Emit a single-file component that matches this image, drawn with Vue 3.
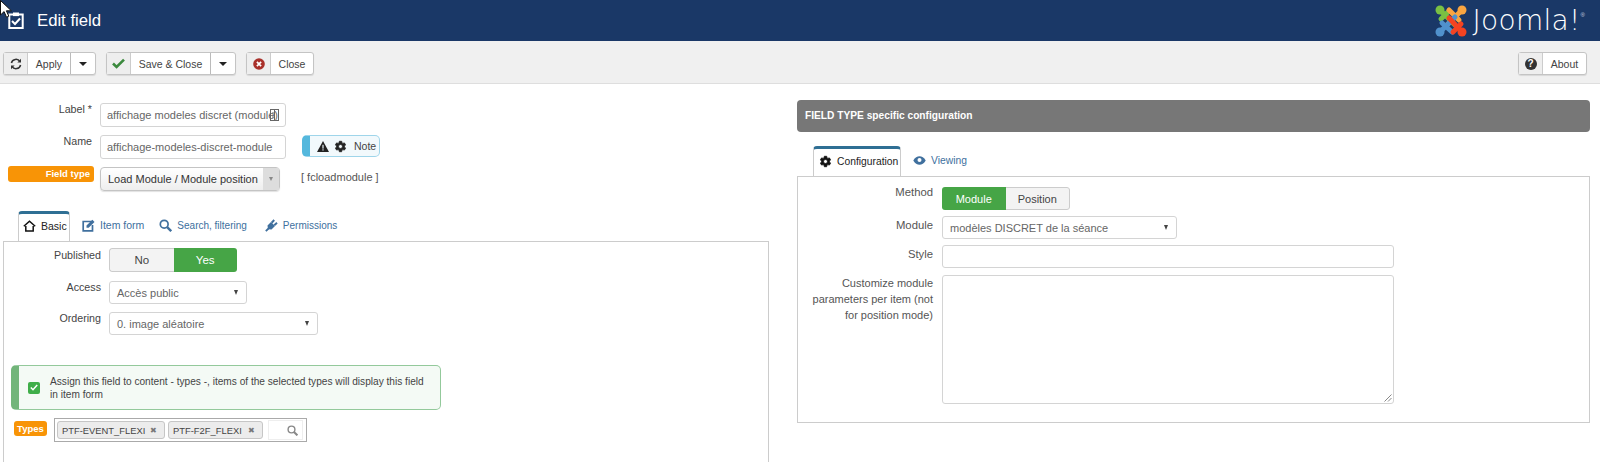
<script setup>
const gear = 'M19.14 12.94c.04-.3.06-.61.06-.94 0-.32-.02-.64-.07-.94l2.03-1.58a.49.49 0 0 0 .12-.61l-1.92-3.32a.488.488 0 0 0-.59-.22l-2.39.96c-.5-.38-1.03-.7-1.62-.94l-.36-2.54a.484.484 0 0 0-.48-.41h-3.84c-.24 0-.43.17-.47.41l-.36 2.54c-.59.24-1.13.57-1.62.94l-2.39-.96c-.22-.08-.47 0-.59.22L2.74 8.87c-.12.21-.08.47.12.61l2.03 1.58c-.05.3-.09.63-.09.94s.02.64.07.94l-2.03 1.58a.49.49 0 0 0-.12.61l1.92 3.32c.12.22.37.29.59.22l2.39-.96c.5.38 1.03.7 1.62.94l.36 2.54c.05.24.24.41.48.41h3.84c.24 0 .44-.17.47-.41l.36-2.54c.59-.24 1.13-.56 1.62-.94l2.39.96c.22.08.47 0 .59-.22l1.92-3.32c.12-.22.07-.47-.12-.61l-2.01-1.58zM12 15.6c-1.98 0-3.6-1.62-3.6-3.6s1.62-3.6 3.6-3.6 3.6 1.62 3.6 3.6-1.62 3.6-3.6 3.6z'
</script>

<template>
  <div class="page">
    <svg class="cursor" width="13" height="20" viewBox="0 0 13 20">
      <path d="M0.5 0.5V15l3.6-3.4 2.4 5.6 2.3-1-2.4-5.4h5z" fill="#fff" stroke="#111" stroke-width="1" />
    </svg>

    <header class="topbar">
      <div class="title">
        <svg class="title-icon" width="16" height="17" viewBox="0 0 16 17">
          <path d="M5 2.500H1.300v13.500h13.400V2.500H11" fill="none" stroke="#fff" stroke-width="2" />
          <rect x="5" y="0.500" width="6" height="3.600" fill="#fff" />
          <path d="M4 9l3 3 5-5.500" fill="none" stroke="#fff" stroke-width="2" />
        </svg>
        <span>Edit field</span>
      </div>
      <div class="brand">
        <svg width="32" height="32" viewBox="0 0 32 32" fill="none" stroke-width="5" stroke-linecap="round">
          <path d="M14 6L6 14" stroke="#7ac143" />
          <path d="M5 5l15 15" stroke="#7ac143" />
          <circle cx="5" cy="5" r="4.500" fill="#7ac143" />
          <path d="M14 5l10 10" stroke="#f9a541" />
          <path d="M27 5L12 20" stroke="#f9a541" />
          <circle cx="27" cy="5" r="4.500" fill="#f9a541" />
          <path d="M5 27L20 12" stroke="#5091cd" />
          <path d="M7 18l10 9" stroke="#5091cd" />
          <circle cx="5" cy="27" r="4.500" fill="#5091cd" />
          <path d="M27 27L14 13" stroke="#f44321" />
          <path d="M18 27l8-8" stroke="#f44321" />
          <circle cx="27" cy="27" r="4.500" fill="#f44321" />
        </svg>
        <span class="brand-word">Joomla!</span><sup class="brand-reg">®</sup>
      </div>
    </header>

    <nav class="toolbar">
      <div class="btn-group">
        <span class="btn-icon">
          <svg width="12" height="12" viewBox="0 0 12 12" fill="none" stroke="#333" stroke-width="1.500">
            <path d="M1.400 5A4.700 4.700 0 0 1 10 3.600" />
            <path d="M10.600 7A4.700 4.700 0 0 1 2 8.400" />
            <path d="M11 .8V4.400H7.400z" fill="#333" stroke="none" />
            <path d="M1 11.200V7.600h3.600z" fill="#333" stroke="none" />
          </svg>
        </span>
        <span class="btn-text w-apply">Apply</span>
        <span class="btn-caret"><i class="caret"></i></span>
      </div>
      <div class="btn-group">
        <span class="btn-icon">
          <svg width="13" height="11" viewBox="0 0 13 11" fill="none" stroke="#3c8a3e" stroke-width="2.600">
            <path d="M1 5.500l3.600 3.500L12 1.600" />
          </svg>
        </span>
        <span class="btn-text w-save">Save &amp; Close</span>
        <span class="btn-caret"><i class="caret"></i></span>
      </div>
      <div class="btn-group">
        <span class="btn-icon">
          <svg width="12" height="12" viewBox="0 0 12 12">
            <circle cx="6" cy="6" r="5.800" fill="#a9302a" />
            <path d="M3.900 3.900l4.200 4.200M8.100 3.900L3.900 8.100" stroke="#fff" stroke-width="1.700" />
          </svg>
        </span>
        <span class="btn-text w-close">Close</span>
      </div>
      <div class="btn-group about">
        <span class="btn-icon">
          <span class="help">?</span>
        </span>
        <span class="btn-text w-about">About</span>
      </div>
    </nav>

    <main class="content">
      <section class="left">
        <div class="row row-label">
          <label class="lbl lbl-top">Label *</label>
          <div class="input input-top">
            <span class="input-val">affichage modeles discret (module)</span>
            <svg class="copy-ico" width="9" height="12" viewBox="0 0 9 12" fill="none" stroke="#666">
              <rect x="0.500" y="0.500" width="8" height="11" />
              <path d="M4.500 .5v11M2 4h2.500M2 8h2.500" />
            </svg>
          </div>
        </div>
        <div class="row row-name">
          <label class="lbl lbl-top">Name</label>
          <div class="input input-top"><span class="input-val">affichage-modeles-discret-module</span></div>
          <div class="note">
            <svg width="12" height="11" viewBox="0 0 12 11"><path d="M6 0l6 11H0z" fill="#222" /><rect x="5.400" y="3.800" width="1.200" height="3.800" fill="#e9f6fb" /><rect x="5.400" y="8.300" width="1.200" height="1.200" fill="#e9f6fb" /></svg>
            <svg width="13" height="13" viewBox="0 0 24 24"><path :d="gear" fill="#222" stroke="#222" stroke-width="1.500" /></svg>
            <span>Note</span>
          </div>
        </div>
        <div class="row row-type">
          <span class="field-type">Field type</span>
          <div class="chosen">
            <span class="chosen-val">Load Module / Module position</span>
            <span class="chosen-arrow"><i class="mini-caret"></i></span>
          </div>
          <span class="type-code">[ fcloadmodule ]</span>
        </div>

        <div class="tabs tabs-left">
          <span class="tab active">
            <svg width="13" height="12" viewBox="0 0 13 12" fill="none" stroke="#111" stroke-width="1.500">
              <path d="M.8 6.300L6.500 1.200l5.700 5.100" /><path d="M2.800 6v5h7.400V6" />
            </svg>
            <span>Basic</span>
          </span>
          <span class="tab">
            <svg width="13" height="13" viewBox="0 0 13 13" fill="none">
              <path d="M10 2.500H1.200v9.300h9.300V6" stroke="#40709e" stroke-width="1.700" />
              <path d="M4.500 8.800V6.600L10.400.8l2.100 2.100L6.700 8.800z" fill="#40709e" />
            </svg>
            <span>Item form</span>
          </span>
          <span class="tab tab-narrow">
            <svg width="13" height="13" viewBox="0 0 13 13" fill="none" stroke="#40709e">
              <circle cx="5.200" cy="5.200" r="3.900" stroke-width="1.700" />
              <path d="M8.200 8.200l4 4" stroke-width="2.400" />
            </svg>
            <span>Search, filtering</span>
          </span>
          <span class="tab tab-narrow">
            <svg width="13" height="13" viewBox="0 0 13 13" fill="#40709e" stroke="#40709e">
              <path d="M3 10.300L2.500 6.500 6 3l4 4-3.500 3.500z" stroke="none" />
              <path d="M6.700 3.700L9.200 1M9.300 6.300L12 3.800" stroke-width="2" fill="none" />
              <path d="M3.500 9.500L.8 12.200" stroke-width="1.800" fill="none" />
            </svg>
            <span>Permissions</span>
          </span>
        </div>

        <div class="panel panel-left">
          <div class="row p-published">
            <label class="lbl lbl-panel">Published</label>
            <div class="toggle">
              <span class="tg tg-off">No</span>
              <span class="tg tg-on">Yes</span>
            </div>
          </div>
          <div class="row p-access">
            <label class="lbl lbl-panel">Access</label>
            <div class="select s-access"><span>Accès public</span><i class="sel-caret"></i></div>
          </div>
          <div class="row p-ordering">
            <label class="lbl lbl-panel">Ordering</label>
            <div class="select s-ordering"><span>0. image aléatoire</span><i class="sel-caret"></i></div>
          </div>

          <div class="assign">
            <span class="checkbox">
              <svg width="8" height="7" viewBox="0 0 8 7" fill="none" stroke="#fff" stroke-width="1.500"><path d="M.8 3.500l2.200 2.200L7.200 1" /></svg>
            </span>
            <p>Assign this field to content - types -, items of the selected types will display this field in item form</p>
          </div>

          <div class="types-row">
            <span class="types-badge">Types</span>
            <div class="types-box">
              <span class="chip chip-a">PTF-EVENT_FLEXI<b>✖</b></span>
              <span class="chip chip-b">PTF-F2F_FLEXI<b>✖</b></span>
              <span class="type-search">
                <svg width="11" height="11" viewBox="0 0 11 11" fill="none" stroke="#888">
                  <circle cx="4.500" cy="4.500" r="3.400" stroke-width="1.400" />
                  <path d="M7 7l3.400 3.400" stroke-width="2" />
                </svg>
              </span>
            </div>
          </div>
        </div>
      </section>

      <section class="right">
        <div class="heading">FIELD TYPE specific configuration</div>
        <div class="tabs tabs-right">
          <span class="tab active">
            <svg width="13" height="13" viewBox="0 0 24 24"><path :d="gear" fill="#111" stroke="#111" stroke-width="1.500" /></svg>
            <span>Configuration</span>
          </span>
          <span class="tab">
            <svg width="13" height="9" viewBox="0 0 13 9">
              <path d="M.3 4.500C2 1.600 4.200.3 6.500.3s4.500 1.300 6.200 4.200C11 7.400 8.800 8.700 6.500 8.700S2 7.400.3 4.500z" fill="#40709e" />
              <circle cx="6.500" cy="4" r="2" fill="#fff" />
            </svg>
            <span>Viewing</span>
          </span>
        </div>
        <div class="panel panel-right">
          <div class="row r-method">
            <label class="lbl lbl-right">Method</label>
            <div class="toggle toggle-right">
              <span class="tg tg-on">Module</span>
              <span class="tg tg-off tg-plain">Position</span>
            </div>
          </div>
          <div class="row r-module">
            <label class="lbl lbl-right">Module</label>
            <div class="select s-module"><span>modèles DISCRET de la séance</span><i class="sel-caret"></i></div>
          </div>
          <div class="row r-style">
            <label class="lbl lbl-right">Style</label>
            <div class="select s-style"></div>
          </div>
          <div class="row r-custom">
            <label class="lbl lbl-right lbl-multi">Customize module parameters per item (not for position mode)</label>
            <div class="textarea">
              <svg class="grip" width="8" height="8" viewBox="0 0 8 8" stroke="#888" fill="none">
                <path d="M7.500 .5L.5 7.500M7.500 4L4 7.500" />
              </svg>
            </div>
          </div>
        </div>
      </section>
    </main>
  </div>
</template>

<style>
html, body { margin: 0; background: #fff; overflow: hidden; }
</style>

<style scoped>
.page {
  position: relative;
  width: 1600px;
  height: 462px;
  overflow: hidden;
  font-family: "Liberation Sans", Arial, sans-serif;
  font-size: 12px;
  color: #555;
  background: #fff;
}
.cursor { position: absolute; left: 0; top: 0; z-index: 5; }

.topbar {
  height: 41px;
  background: #1a3867;
  display: flex;
  justify-content: space-between;
  align-items: center;
  color: #fff;
}
.title { display: flex; align-items: center; gap: 13px; padding: 0 0 0 8px; font-size: 16.700px; }
.title-icon { flex: none; }
.brand { display: flex; align-items: center; padding-right: 15px; }
.brand svg { margin-right: 6px; }
.brand-word {
  font-family: "DejaVu Sans", Lato, sans-serif;
  font-weight: 200;
  font-size: 28px;
  line-height: 30px;
  letter-spacing: 0.300px;
}
.brand-reg { font-size: 6px; margin: -12px 0 0 0; color: #cfd6e0; }

.toolbar {
  height: 43px;
  box-sizing: border-box;
  background: #f0f0f0;
  border-bottom: 1px solid #dedede;
  display: flex;
  align-items: flex-start;
  padding: 11px 13px 0 3px;
  gap: 10px;
}
.btn-group {
  display: flex;
  height: 23px;
  box-sizing: border-box;
  border: 1px solid #c4c4c4;
  border-radius: 3px;
  background: #fff;
  font-size: 10.500px;
  color: #444;
  box-shadow: 0 1px 1px rgba(0,0,0,.1);
}
.btn-icon {
  width: 23px;
  background: #eee;
  border-right: 1px solid #ccc;
  display: flex;
  align-items: center;
  justify-content: center;
}
.btn-text { display: flex; align-items: center; justify-content: center; }
.w-apply { width: 42px; }
.w-save { width: 79px; }
.w-close { width: 42px; }
.w-about { width: 43px; font-size: 10.500px; }
.btn-caret {
  width: 24px;
  border-left: 1px solid #bbb;
  display: flex;
  align-items: center;
  justify-content: center;
}
.caret {
  width: 0; height: 0;
  border-left: 4px solid transparent;
  border-right: 4px solid transparent;
  border-top: 4px solid #222;
}
.about { margin-left: auto; }
.help {
  width: 12px; height: 12px;
  border-radius: 50%;
  background: #333;
  color: #fff;
  font-size: 10px;
  font-weight: 700;
  line-height: 12px;
  text-align: center;
}

.content { display: flex; align-items: flex-start; }
.left { width: 770px; flex: none; padding-top: 19px; }
.right { flex: none; margin-left: 27px; width: 793px; padding-top: 16px; }
.row { display: flex; align-items: flex-start; }
.lbl { display: block; text-align: right; }
.lbl-top { width: 92px; margin-right: 8px; color: #444; font-size: 10.700px; line-height: 12px; }
.row-name { margin-top: 8px; }
.input {
  box-sizing: border-box;
  height: 24px;
  border: 1px solid #d4d4d4;
  border-radius: 3px;
  display: flex;
  align-items: center;
  position: relative;
  padding: 0 6px;
}
.input-top { width: 186px; font-size: 11px; color: #666; overflow: hidden; }
.input-val { white-space: nowrap; }
.copy-ico { position: absolute; right: 6px; top: 5px; }
.note {
  box-sizing: border-box;
  margin-left: 16px;
  width: 78px;
  height: 22px;
  border: 1px solid #9fd5ea;
  border-left: 8px solid #55b8dd;
  border-radius: 5px;
  background: #f2f9fc;
  display: flex;
  align-items: center;
  padding-left: 7px;
  gap: 5px;
  font-size: 10.500px;
  color: #444;
}
.note span { margin-left: 2px; }
.row-type { margin-top: 7px; }
.field-type {
  box-sizing: border-box;
  margin: 0 0 0 8px;
  width: 86px;
  height: 16px;
  background: #f89406;
  border-radius: 3px;
  color: #fff;
  font-size: 9.500px;
  font-weight: 700;
  line-height: 15px;
  text-align: right;
  padding-right: 4px;
}
.chosen {
  margin: 1px 0 0 6px;
  box-sizing: border-box;
  width: 180px;
  height: 24px;
  border: 1px solid #c4c4c4;
  border-radius: 4px;
  display: flex;
  background: linear-gradient(#fff, #eee);
  box-shadow: 0 1px 1px rgba(0,0,0,.12);
}
.chosen-val { flex: 1; padding-left: 7px; line-height: 22px; font-size: 11px; color: #333; white-space: nowrap; }
.chosen-arrow {
  width: 16px;
  background: #ddd;
  display: flex;
  align-items: center;
  justify-content: center;
}
.mini-caret {
  width: 0; height: 0;
  border-left: 2.500px solid transparent;
  border-right: 2.500px solid transparent;
  border-top: 4px solid #888;
}
.type-code { margin: 5px 0 0 21px; font-size: 11px; color: #555; white-space: nowrap; }

.tabs { display: flex; font-size: 10.500px; color: #40709e; }
.tab { display: flex; align-items: center; gap: 5px; white-space: nowrap; }
.tab-narrow { font-size: 10px; }
.tab.active {
  position: relative;
  z-index: 1;
  box-sizing: border-box;
  background: #fff;
  border: 1px solid #ccc;
  border-top: 3px solid #2f6f94;
  border-bottom: 0;
  border-radius: 4px 4px 0 0;
  color: #222;
}
.tabs-left { margin: 20px 0 0 18px; height: 30px; }
.tabs-left .tab.active { width: 52px; height: 30px; padding-left: 4px; padding-bottom: 3px; margin-bottom: -1px; }
.tabs-left .tab:nth-child(2) { margin-left: 12px; padding-bottom: 2px; }
.tabs-left .tab:nth-child(3) { margin-left: 15px; padding-bottom: 2px; }
.tabs-left .tab:nth-child(4) { margin-left: 18px; padding-bottom: 2px; }

.panel { box-sizing: border-box; border: 1px solid #ccc; }
.panel-left { margin-left: 3px; width: 766px; height: 240px; padding-top: 6px; }
.lbl-panel { width: 97px; margin-right: 8px; color: #444; font-size: 10.700px; line-height: 14px; }
.p-access .lbl, .p-ordering .lbl { line-height: 12px; }
.toggle {
  display: flex;
  width: 128px;
  height: 24px;
  box-sizing: border-box;
  border-radius: 3px;
  overflow: hidden;
  font-size: 11.500px;
}
.tg { flex: 1; display: flex; align-items: center; justify-content: center; box-sizing: border-box; }
.tg-off { background: #f3f3f3; border: 1px solid #ccc; border-right: 0; color: #444; border-radius: 3px 0 0 3px; }
.tg-plain { border: 1px solid #ccc; border-left: 0; border-radius: 0 3px 3px 0; font-size: 11px; }
.tg-on { background: #46a546; color: #fff; }
.p-access { margin-top: 9px; }
.p-ordering { margin-top: 8px; }
.select {
  box-sizing: border-box;
  height: 23px;
  border: 1px solid #d4d4d4;
  border-radius: 3px;
  display: flex;
  align-items: center;
  justify-content: space-between;
  padding: 0 7px;
  color: #666;
  font-size: 11px;
  background: #fff;
  white-space: nowrap;
}
.sel-caret {
  width: 0; height: 0;
  border-left: 2.500px solid transparent;
  border-right: 2.500px solid transparent;
  border-top: 5px solid #444;
  margin-right: 1px;
}
.s-access { width: 138px; }
.s-ordering { width: 209px; }

.assign {
  box-sizing: border-box;
  margin: 30px 0 0 7px;
  width: 430px;
  height: 45px;
  border: 1px solid #93c99b;
  border-left: 8px solid #72b57a;
  border-radius: 5px;
  background: #f4faf5;
  display: flex;
  align-items: center;
  padding: 0 9px 0 9px;
  gap: 10px;
}
.assign p { margin: 0; font-size: 10.150px; line-height: 13px; color: #444; }
.checkbox {
  flex: none;
  width: 12px; height: 12px;
  border-radius: 2px;
  background: #3fae49;
  display: flex;
  align-items: center;
  justify-content: center;
}
.types-row { display: flex; align-items: flex-start; margin: 8px 0 0 10px; }
.types-badge {
  margin-top: 3px;
  width: 33px;
  height: 15px;
  background: #f89406;
  border-radius: 3px;
  color: #fff;
  font-size: 9.500px;
  font-weight: 700;
  line-height: 15px;
  text-align: center;
}
.types-box {
  box-sizing: border-box;
  margin-left: 7px;
  width: 253px;
  height: 24px;
  border: 1px solid #aaa;
  display: flex;
  align-items: flex-start;
  padding: 2px 0 0 2px;
  gap: 3px;
}
.chip {
  box-sizing: border-box;
  height: 18px;
  border: 1px solid #c6c6c6;
  border-radius: 3px;
  background: #ececec;
  display: flex;
  align-items: center;
  justify-content: space-between;
  padding: 0 7px 0 4px;
  font-size: 9.400px;
  color: #444;
  white-space: nowrap;
}
.chip b { font-size: 8px; font-weight: 400; color: #777; }
.chip-a { width: 108px; }
.chip-b { width: 95px; }
.type-search {
  box-sizing: border-box;
  margin: -1px 0 0 2px;
  width: 35px;
  height: 20px;
  border: 1px solid #eee;
  display: flex;
  align-items: center;
  justify-content: flex-end;
  padding-right: 4px;
}

.heading {
  box-sizing: border-box;
  height: 32px;
  background: #777;
  border-radius: 4px;
  color: #fff;
  font-size: 10.200px;
  font-weight: 700;
  line-height: 31px;
  padding-left: 8px;
}
.tabs-right { margin: 14px 0 0 16px; height: 30px; font-size: 10.300px; }
.tabs-right .tab.active { width: 88px; height: 30px; padding: 0 0 2px 5px; margin-bottom: -1px; }
.tabs-right .tab:nth-child(2) { margin-left: 12px; padding-bottom: 2px; }
.panel-right { height: 247px; padding-top: 10px; }
.lbl-right { width: 135px; margin-right: 9px; color: #555; font-size: 11.300px; line-height: 14px; }
.toggle-right { width: 128px; height: 23px; font-size: 11px; }
.toggle-right .tg-on { font-weight: 400; }
.r-method .lbl { line-height: 11px; }
.r-module .lbl { padding-top: 2px; }
.r-module { margin-top: 6px; }
.s-module { width: 235px; }
.r-style { margin-top: 6px; }
.r-style .lbl { padding-top: 2px; }
.s-style { width: 452px; }
.r-custom { margin-top: 7px; }
.lbl-multi { line-height: 16px; font-size: 11px; }
.textarea {
  box-sizing: border-box;
  position: relative;
  width: 452px;
  height: 129px;
  border: 1px solid #d4d4d4;
  border-radius: 3px;
}
.grip { position: absolute; right: 1px; bottom: 1px; }
</style>
